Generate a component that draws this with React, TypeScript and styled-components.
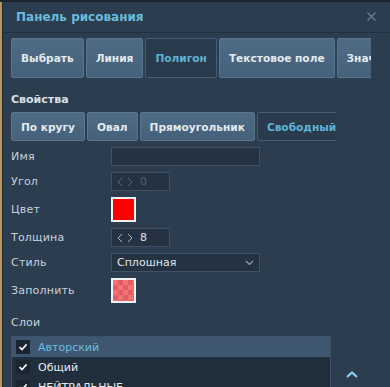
import * as React from 'react';
import styled, { createGlobalStyle } from 'styled-components';

const Global = createGlobalStyle`
    html, body {
        margin: 0;
        padding: 0;
        background: #2c3d4f;
        overflow: hidden;
    }
    * {
        box-sizing: border-box;
    }
`;

const Frame = styled.div`
    display: flex;
    width: 390px;
    height: 387px;
    font-family: 'DejaVu Sans', 'Noto Sans', sans-serif;
    overflow: hidden;
    border-top: 2px solid #1c2630;
`;

const Edge = styled.div`
    flex: none;
    width: 3px;
    background: #b8955a;
    border-right: 1px solid #1f2a35;
`;

const Panel = styled.div`
    position: relative;
    flex: 1;
    background: #2c3d4f;
`;

const Header = styled.div`
    height: 31px;
    display: flex;
    align-items: center;
    justify-content: space-between;
    padding: 0 14px 1px 13px;
    border-bottom: 1px solid #23313f;
`;

const Title = styled.div`
    color: #68bcdc;
    font-size: 12px;
    font-weight: bold;
`;

const Strip = styled.div<{ w: number }>`
    display: flex;
    gap: 2px;
    width: ${(p) => p.w}px;
    overflow: hidden;
    margin-left: 8px;
`;

const Tab = styled.div<{ active?: boolean; h: number }>`
    flex: none;
    height: ${(p) => p.h}px;
    padding: 0 9px;
    display: flex;
    align-items: center;
    font-size: 10.6px;
    font-weight: bold;
    color: #e3e9ef;
    background: linear-gradient(#4f6b86, #45607a);
    border: 1px solid #5a7690;
    border-radius: 2px;
    ${(p) =>
        p.active &&
        `
        color: #5fb3d6;
        background: #2a3b4d;
        border-color: #465c72;
    `}
`;

const Section = styled.div`
    color: #d7e0e8;
    font-size: 11px;
    font-weight: bold;
    margin: 15px 0 6px 8px;
`;

const Form = styled.div`
    display: grid;
    grid-template-columns: 100px 1fr;
    row-gap: 6px;
    align-items: center;
    margin: 6px 0 0 8px;
`;

const Label = styled.div`
    color: #c8d1da;
    font-size: 11px;
    letter-spacing: 0.2px;
`;

const Field = styled.div<{ w: number }>`
    width: ${(p) => p.w}px;
    height: 19px;
    background: #243241;
    border: 1px solid #3e5166;
    display: flex;
    align-items: center;
    padding: 0 5px;
    font-size: 11px;
    color: #d8e0e8;
    gap: 7px;
`;

const Arrows = styled.span`
    display: flex;
    gap: 4px;
`;

const Value = styled.span<{ dim?: boolean }>`
    color: ${(p) => (p.dim ? '#4f6275' : '#e0e6ec')};
`;

const Swatch = styled.div<{ fill: string }>`
    width: 25px;
    height: 25px;
    border: 2px solid #f2f2f2;
    background: ${(p) => p.fill};
`;

const Checker = styled(Swatch)`
    background-color: #f27474;
    background-image: linear-gradient(45deg, #e25d64 25%, transparent 25%, transparent 75%, #e25d64 75%),
        linear-gradient(45deg, #e25d64 25%, transparent 25%, transparent 75%, #e25d64 75%);
    background-size: 10px 10px;
    background-position: 0 0, 5px 5px;
`;

const Select = styled(Field)`
    justify-content: space-between;
`;

const Layers = styled.div`
    color: #c8d1da;
    font-size: 11px;
    letter-spacing: 0.2px;
    margin: 13px 0 7px 8px;
`;

const List = styled.div`
    width: 320px;
    margin-left: 8px;
    background: #212e3b;
    border: 1px solid #3e5166;
    border-bottom: none;
`;

const Row = styled.div<{ active?: boolean }>`
    height: 20px;
    display: flex;
    align-items: center;
    gap: 8px;
    padding-left: 4px;
    font-size: 11px;
    color: ${(p) => (p.active ? '#6cbfe0' : '#e6ebf0')};
    background: ${(p) => (p.active ? '#3f5670' : 'transparent')};
`;

const Check = styled.div`
    width: 14px;
    height: 14px;
    background: #1a2530;
    display: flex;
    align-items: center;
    justify-content: center;
`;

const ScrollUp = styled.div`
    position: absolute;
    right: 31px;
    bottom: 4px;
`;

const Tick = () => (
    <Check>
        <svg width="10" height="10" viewBox="0 0 10 10">
            <path d="M1.5 5.2 L4 7.6 L8.6 2.4" stroke="#f0f4f8" strokeWidth="1.6" fill="none" />
        </svg>
    </Check>
);

const Spin = ({ dim }: { dim?: boolean }) => {
    const c = dim ? '#55687b' : '#a9b5c1';
    return (
        <Arrows>
            <svg width="6" height="10" viewBox="0 0 6 10">
                <path d="M5 1 L1 5 L5 9" stroke={c} strokeWidth="1" fill="none" />
            </svg>
            <svg width="6" height="10" viewBox="0 0 6 10">
                <path d="M1 1 L5 5 L1 9" stroke={c} strokeWidth="1" fill="none" />
            </svg>
        </Arrows>
    );
};

export default function App() {
    const tools = ['Выбрать', 'Линия', 'Полигон', 'Текстовое поле', 'Значок'];
    const shapes = ['По кругу', 'Овал', 'Прямоугольник', 'Свободный'];

    return (
        <>
            <Global />
            <Frame>
                <Edge />
                <Panel>
                    <Header>
                        <Title>Панель рисования</Title>
                        <svg width="9" height="9" viewBox="0 0 9 9">
                            <path d="M0.5 0.5 L8.5 8.5 M8.5 0.5 L0.5 8.5" stroke="#6f8294" strokeWidth="1.1" />
                        </svg>
                    </Header>
                    <Strip w={360} style={{ marginTop: 5 }}>
                        {tools.map((t) => (
                            <Tab key={t} h={40} active={t == 'Полигон'}>
                                {t}
                            </Tab>
                        ))}
                    </Strip>
                    <Section>Свойства</Section>
                    <Strip w={325}>
                        {shapes.map((t) => (
                            <Tab key={t} h={29} active={t == 'Свободный'}>
                                {t}
                            </Tab>
                        ))}
                    </Strip>
                    <Form>
                        <Label>Имя</Label>
                        <Field w={149} />
                        <Label>Угол</Label>
                        <Field w={59}>
                            <Spin dim />
                            <Value dim>0</Value>
                        </Field>
                        <Label>Цвет</Label>
                        <Swatch fill="#ff0000" />
                        <Label>Толщина</Label>
                        <Field w={59}>
                            <Spin />
                            <Value>8</Value>
                        </Field>
                        <Label>Стиль</Label>
                        <Select w={149}>
                            <Value>Сплошная</Value>
                            <svg width="9" height="6" viewBox="0 0 9 6">
                                <path d="M1 1 L4.5 4.5 L8 1" stroke="#9aa8b6" strokeWidth="1.1" fill="none" />
                            </svg>
                        </Select>
                        <Label>Заполнить</Label>
                        <Checker fill="#f27474" />
                    </Form>
                    <Layers>Слои</Layers>
                    <List>
                        <Row active>
                            <Tick />
                            Авторский
                        </Row>
                        <Row>
                            <Tick />
                            Общий
                        </Row>
                        <Row>
                            <Tick />
                            НЕЙТРАЛЬНЫЕ
                        </Row>
                    </List>
                    <ScrollUp>
                        <svg width="14" height="9" viewBox="0 0 14 9">
                            <path d="M2 7 L7 2.5 L12 7" stroke="#8fd0ee" strokeWidth="2.2" fill="none" />
                        </svg>
                    </ScrollUp>
                </Panel>
            </Frame>
        </>
    );
}
